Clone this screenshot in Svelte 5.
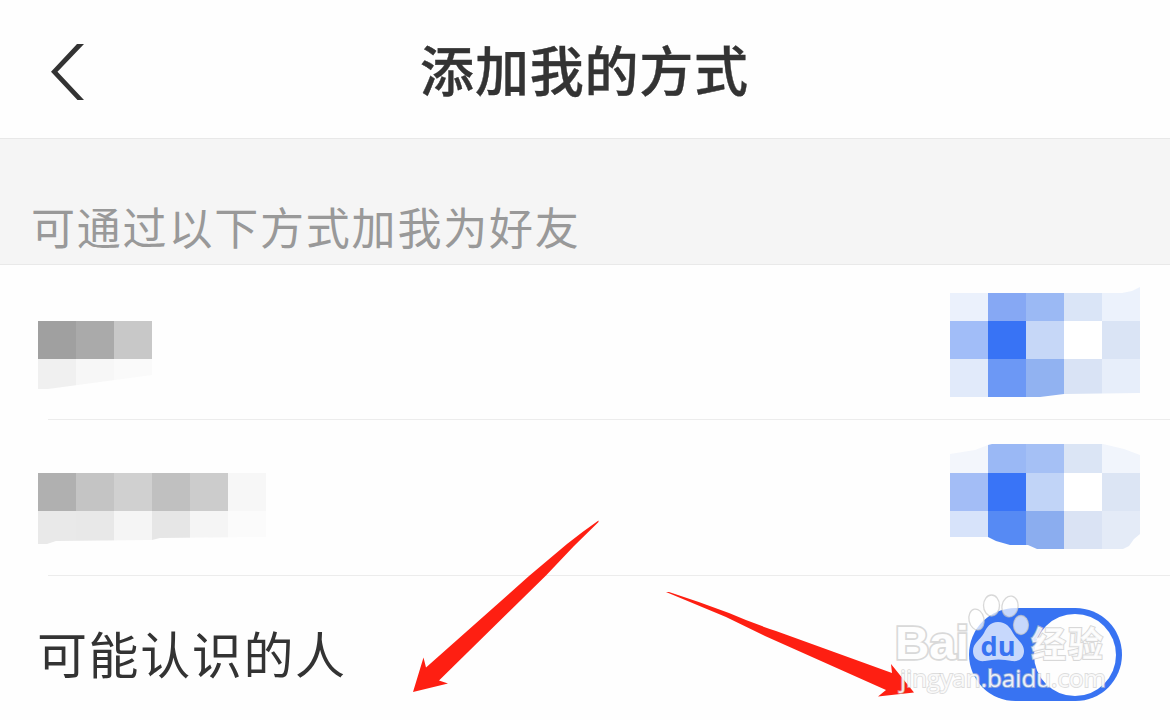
<script lang="ts">
	const CELL = 38

	/**
	 * each mosaic is a list of strips: top edge, height, colours
	 */
	const phoneLabel = [
		{ y: 28, h: 38, colors: ['#a0a0a0', '#aaaaaa', '#c8c8c8'] },
		{ y: 66, h: 38, colors: ['#f0f0f0', '#f7f7f7', '#fafafa'] }
	]
	const accountLabel = [
		{ y: 29, h: 38, colors: ['#b0b0b0', '#c4c4c4', '#d0d0d0', '#c0c0c0', '#cccccc', '#f7f7f7'] },
		{ y: 67, h: 38, colors: ['#e9e9e9', '#e8e8e8', '#f5f5f5', '#e6e6e6', '#f5f5f5', '#fbfbfb'] }
	]
	const phoneSwitch = [
		{ y: 0, h: 34, colors: ['#ebf1fc', '#86a8f4', '#9bb9f4', '#dae5f7', '#ecf2fc'] },
		{ y: 34, h: 38, colors: ['#a1bdf8', '#3873f5', '#c6d7f7', '#ffffff', '#dae4f5'] },
		{ y: 72, h: 38, colors: ['#e1eafa', '#6c98f5', '#91b2f1', '#d9e3f5', '#e7eefa'] }
	]
	const accountSwitch = [
		{ y: 0, h: 29, colors: ['#f3f6fc', '#9ab8f5', '#a5c0f5', '#dbe5f5', '#f1f5fc'] },
		{ y: 29, h: 38, colors: ['#a3bdf6', '#3974f7', '#c1d4f7', '#ffffff', '#dce5f4'] },
		{ y: 67, h: 38, colors: ['#d7e3fa', '#568af4', '#8badef', '#dae3f4', '#e4ebf7'] }
	]

	let checked = true
</script>

{#snippet mosaic(strips, name)}
	<svg class="mosaic {name}" width={strips[0].colors.length * CELL} height="110" shape-rendering="crispEdges">
		{#each strips as strip}
			{#each strip.colors as color, i}
				<rect x={i * CELL} y={strip.y} width={CELL} height={strip.h} fill={color} />
			{/each}
		{/each}
	</svg>
{/snippet}

<main class="page">
	<header class="header">
		<button class="back" aria-label="返回">
			<svg width="34" height="56" viewBox="0 0 34 56">
				<path d="M27 0H34L7.5 27.7 34 56h-6.5L1 27.7z" fill="#333" />
			</svg>
		</button>
		<h1 class="title">添加我的方式</h1>
	</header>

	<p class="caption">可通过以下方式加我为好友</p>

	<ul class="list">
		<li class="row phone">
			{@render mosaic(phoneLabel, 'phone-label')}
			{@render mosaic(phoneSwitch, 'phone-switch')}
		</li>
		<li class="row account">
			{@render mosaic(accountLabel, 'account-label')}
			{@render mosaic(accountSwitch, 'account-switch')}
		</li>
		<li class="row people">
			<span class="label">可能认识的人</span>
			<button
				class="switch"
				class:on={checked}
				role="switch"
				aria-checked={checked}
				aria-label="可能认识的人"
				on:click={() => (checked = !checked)}
			>
				<span class="knob"></span>
			</button>
		</li>
	</ul>

	<!-- arrows and watermark lie over the list -->
	<svg class="overlay" width="1170" height="720" viewBox="0 0 1170 720">
		<g fill="#fe1f12">
			<path d="M598.5 520.5 L598.5 522 L574 546 L546 575.5 L439 680.5 L448 683.5 L413 692 L423.5 657.5 L426 667.5 L529 576 L567 544 Q582 532 598.5 520.5Z" />
			<path d="M666 592 L669 592 Q700 602 729 613 Q752 623 776 631 L892 673 L891 664 L914 692.5 L878 696.5 L886 690 L765 636 L726 617 Z" />
		</g>
		<g class="mark">
			<text class="latin" x="895" y="658.5" textLength="74" lengthAdjust="spacingAndGlyphs">Bai</text>
			<ellipse cx="976.5" cy="619.5" rx="7.5" ry="10.5" transform="rotate(-12 976.5 619.5)" />
			<ellipse cx="991.5" cy="605.5" rx="8" ry="10.5" />
			<ellipse cx="1010" cy="606.5" rx="8" ry="10.5" transform="rotate(10 1010 606.5)" />
			<ellipse cx="1021" cy="625" rx="7.5" ry="9.5" />
			<path class="pad" d="M998 622c8 0 12 5 15 11 4 7 11 10 11 18 0 7-5 11-12 10-9-2-18-2-27 0-7 1-12-3-12-10 0-8 7-11 11-18 3-6 6-11 14-11z" />
			<text class="cjk" x="1031" y="656.5" textLength="72">经验</text>
		</g>
		<text class="du" x="980.5" y="656" textLength="35" lengthAdjust="spacingAndGlyphs">du</text>
		<text class="url" x="900" y="686.5" textLength="206" lengthAdjust="spacingAndGlyphs">jingyan.baidu.com</text>
	</svg>
</main>

<style>
	:global(body) {
		margin: 0;
		overflow: hidden;
	}

	.page {
		position: relative;
		width: 1170px;
		height: 720px;
		overflow: hidden;
		background: #fefefe;
		color: #333;
		font-family: 'Noto Sans CJK SC', sans-serif;
	}

	.header {
		box-sizing: border-box;
		display: grid;
		grid-template-columns: 84px 1fr 84px;
		align-items: center;
		height: 139px;
		padding-top: 5px;
		border-bottom: 1px solid #e8e8e8;
	}

	button {
		padding: 0;
		border: 0;
		background: none;
		cursor: pointer;
	}

	.back {
		justify-self: end;
		height: 56px;
	}

	.back svg {
		display: block;
	}

	.title {
		margin: 0 1px 5px 0;
		font-size: 54px;
		font-weight: 500;
		line-height: 80px;
		letter-spacing: 0.8px;
		text-align: center;
		-webkit-text-stroke: 0.4px #333;
	}

	.caption {
		box-sizing: border-box;
		height: 126px;
		margin: 0;
		padding: 55px 30px 0 31px;
		border-bottom: 1px solid #e9e9e9;
		background: #f5f5f5;
		color: #999;
		font-size: 44px;
		font-weight: 400;
		line-height: 64px;
		letter-spacing: 1.8px;
	}

	.list {
		margin: 0;
		padding: 0;
		list-style: none;
	}

	.row {
		box-sizing: border-box;
		display: flex;
		justify-content: space-between;
		align-items: flex-start;
		height: 155px;
		padding: 22px 30px 0 38px;
		background: linear-gradient(#ececec, #ececec) 48px 100% / 100% 1px no-repeat;
	}

	.phone {
		padding-top: 28px;
	}

	.account {
		height: 156px;
		padding-top: 24px;
	}

	.mosaic {
		display: block;
	}

	.phone-label {
		clip-path: polygon(0 0, 114px 0, 114px 82px, 10px 96px, 0 96px);
	}

	.account-label {
		clip-path: polygon(0 0, 228px 0, 228px 93px, 122px 94px, 114px 96px, 18px 97px, 9px 100px, 0 100px);
	}

	.phone-switch {
		margin-top: -6px;
		clip-path: polygon(0 6px, 172px 6px, 182px 4px, 190px 0, 190px 106px, 114px 107px, 90px 110px, 0 110px);
	}

	.account-switch {
		clip-path: polygon(0 10px, 25px 6px, 38px 1px, 42px 0, 153px 0, 174px 5px, 190px 11px, 190px 90px, 184px 95px, 179px 102px, 173px 105px, 87px 105px, 78px 101px, 60px 101px, 46px 97px, 38px 93px, 0 93px);
	}

	.people {
		height: 145px;
		padding: 32px 48px 0 37px;
		background: none;
	}

	.label {
		margin-top: -4px;
		font-size: 50px;
		font-weight: 400;
		line-height: 96px;
		letter-spacing: 1.6px;
	}

	.switch {
		box-sizing: border-box;
		display: flex;
		align-items: center;
		width: 153px;
		height: 93px;
		padding: 0 6px;
		border-radius: 47px;
		background: #ddd;
	}

	.switch.on {
		justify-content: flex-end;
		background: #3873f2;
	}

	.knob {
		width: 82px;
		height: 82px;
		border-radius: 50%;
		background: #fefefe;
	}

	.overlay {
		position: absolute;
		inset: 0;
		pointer-events: none;
	}

	.mark {
		fill: rgba(255, 255, 255, 0.72);
		stroke: rgba(200, 200, 200, 0.7);
		stroke-width: 1.3px;
	}

	.pad {
		stroke: none;
	}

	.latin {
		fill: #fefefe;
		stroke: #d9d9d9;
		stroke-width: 3.4px;
		paint-order: stroke;
		font: 700 46px 'Liberation Sans', sans-serif;
	}

	.cjk {
		fill: rgba(255, 255, 255, 0.85);
		stroke-width: 2px;
		paint-order: stroke;
		font: 700 35px 'Noto Sans CJK SC', sans-serif;
	}

	.du {
		fill: #3873f2;
		font: 700 27px 'Open Sans', sans-serif;
	}

	.url {
		fill: rgba(255, 255, 255, 0.85);
		stroke: rgba(200, 200, 200, 0.6);
		stroke-width: 1.8px;
		paint-order: stroke;
		font: 400 24px 'Open Sans', sans-serif;
	}
</style>
